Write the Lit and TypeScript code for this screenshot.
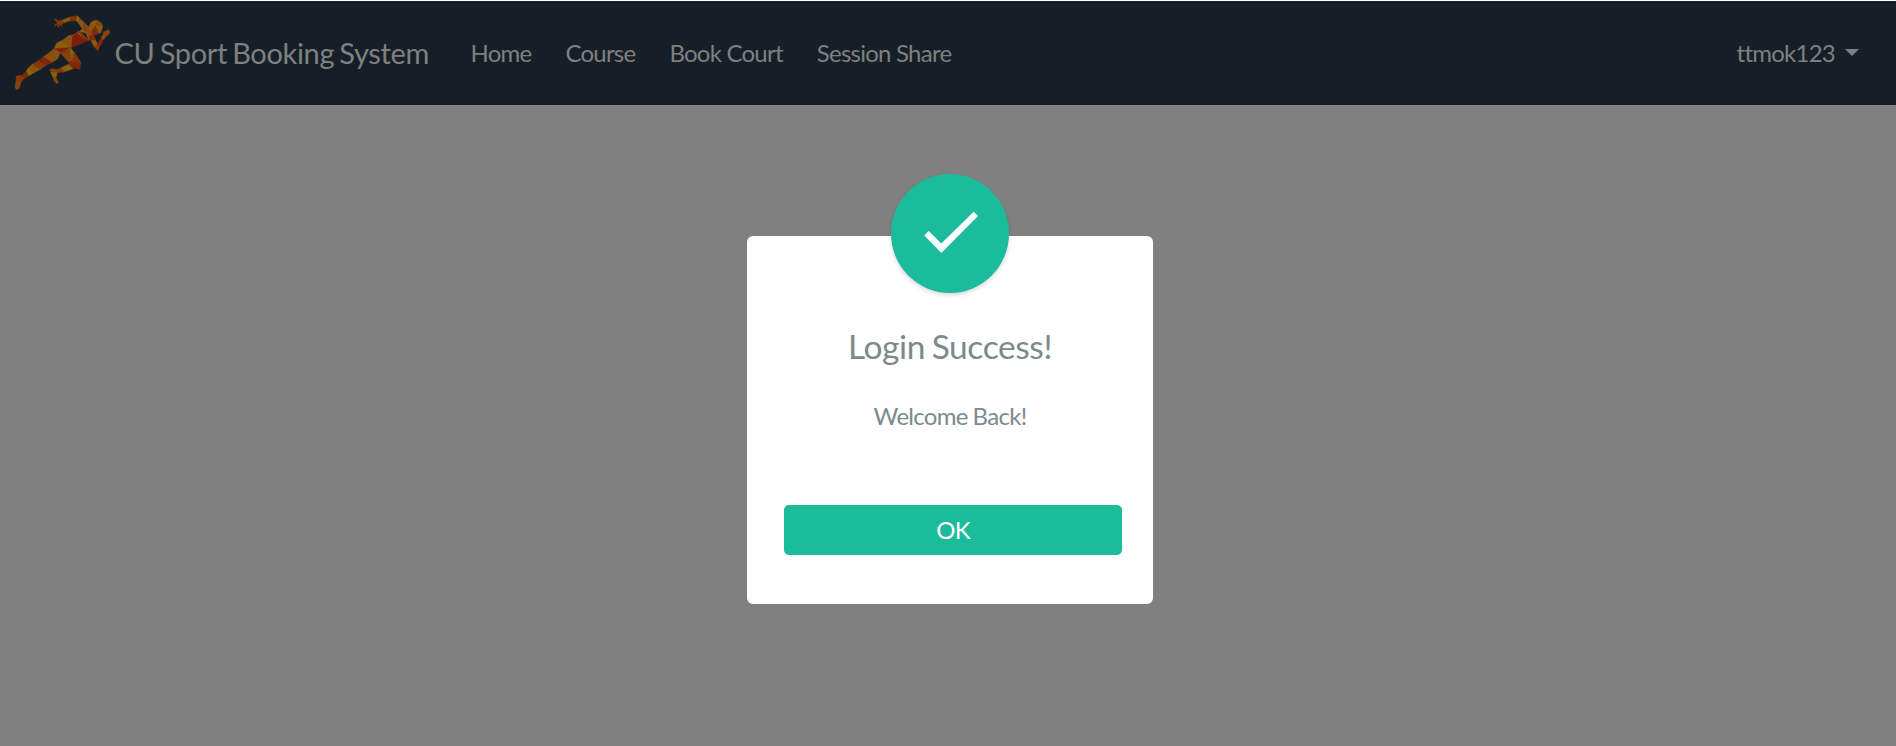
import { LitElement, html, svg, css } from "lit";
import { customElement, property } from "lit/decorators.js";

const FACETS: [string, string][] = [
  // rear arm
  ["163,58 168,56 176,62 189,59 193,67 186,72 187,80 182,74 176,82 173,79 176,73 166,77 165,74 174,69", "#84380c"],
  ["189,59 214,50 212,62 192,68", "#8a5a0c"],
  ["214,50 234,47 230,62 211,62", "#84300c"],
  ["234,47 240,54 236,68 229,61", "#8c640a"],
  ["240,54 254,68 248,86 235,67", "#8a5412"],
  // shoulders and neck
  ["254,68 268,80 262,100 248,86", "#84401c"],
  ["268,80 274,92 283,105 268,122 259,100", "#8a4a10"],
  ["248,86 261,99 240,94", "#8c6208"],
  // head
  ["268,82 273,68 284,61 294,61 288,78 276,94 270,92", "#8c5a0a"],
  ["294,61 306,69 309,78 288,79", "#84480c"],
  ["309,78 306,91 292,89 287,78", "#8a5c10"],
  ["287,78 293,89 298,99 288,105 275,96", "#7e300c"],
  ["293,89 306,91 304,98 298,99", "#8c5408"],
  // front arm
  ["268,108 283,104 288,120 274,123", "#84280c"],
  ["274,123 288,120 294,133 286,143", "#8c5c08"],
  ["286,143 293,132 302,134 295,152", "#84380c"],
  ["294,133 305,112 313,115 301,140", "#7e280c"],
  ["305,112 314,102 319,107 313,118", "#8a520c"],
  ["311,103 312,95 318,94 325,88 331,93 329,102 319,110", "#8a400c"],
  // torso
  ["238,93 222,104 206,107 216,120 236,96", "#8a4c0e"],
  ["240,93 266,120 214,118", "#86560e"],
  ["238,94 268,121 248,114", "#84300c"],
  ["232,99 250,117 267,122 215,143 217,110", "#7c1c0a"],
  ["206,107 217,107 215,143 184,124", "#8a5014"],
  // hips
  ["184,122 214,143 200,149 163,146 170,130", "#8c5e0c"],
  ["163,146 212,143 182,158", "#7c200c"],
  ["182,158 212,143 211,164 190,164", "#843c0c"],
  // front leg
  ["212,143 225,160 211,166", "#8c640a"],
  ["182,158 211,162 207,187", "#85420c"],
  ["211,162 225,160 243,188 207,187", "#8a500e"],
  ["207,184 244,188 240,208 209,203", "#7e280c"],
  ["225,160 244,188 217,184", "#84360c"],
  ["207,193 220,207 192,216 183,204", "#8c600a"],
  ["183,204 193,216 171,218 166,211", "#84380c"],
  ["149,210 158,206 171,210 172,220 162,222", "#84400e"],
  ["152,217 172,219 168,238 160,232", "#8c600a"],
  ["160,231 169,235 176,247 172,252 163,243", "#8a440c"],
  // rear leg
  ["163,146 182,158 173,177 147,159", "#8a5014"],
  ["147,159 173,177 156,188 130,171", "#8a500c"],
  ["130,171 156,188 138,197 116,182", "#80280c"],
  ["116,182 138,197 122,208 97,193", "#84380c"],
  ["97,193 122,208 105,217 84,206", "#8a560e"],
  ["84,206 105,217 86,228 79,215", "#8c640a"],
  ["79,215 86,228 72,238 63,229", "#7e280c"],
  ["62,226 74,235 63,246 49,241 48,229", "#84380c"],
  ["49,241 64,246 57,266 49,270 45,261", "#8a400e"],
];

@customElement("sport-navbar")
export class SportNavbar extends LitElement {
  @property() user = "";

  static styles = css`
    :host {
      display: block;
    }
    .bar {
      display: flex;
      align-items: center;
      height: 104px;
      background: #161f28;
      color: #808080;
      font-size: 24px;
      letter-spacing: -0.76px;
      line-height: 36px;
    }
    .logo {
      display: block;
      width: 114.5px;
      height: 104px;
      flex: none;
    }
    .brand {
      width: 314px;
      font-size: 29px;
      letter-spacing: -0.33px;
      word-spacing: -2px;
      white-space: nowrap;
    }
    .links {
      display: flex;
      gap: 34px;
      margin-left: 42px;
      white-space: nowrap;
    }
    .user {
      display: flex;
      align-items: center;
      gap: 10px;
      margin-left: auto;
      margin-right: 37px;
    }
    .caret {
      border: 7px solid transparent;
      border-top-color: #808080;
      border-bottom: 0;
      margin-bottom: 1px;
    }
  `;

  render() {
    return html`<nav class="bar">
      <svg class="logo" viewBox="0 3 345 312">
        ${FACETS.map(
          ([points, color]) =>
            svg`<polygon points=${points} fill=${color} stroke=${color} stroke-width="1.5"></polygon>`,
        )}
      </svg>
      <span class="brand">CU Sport Booking System</span>
      <div class="links">
        <span>Home</span><span>Course</span><span>Book Court</span><span>Session Share</span>
      </div>
      <div class="user"><span>${this.user}</span><i class="caret"></i></div>
    </nav>`;
  }
}

@customElement("success-dialog")
export class SuccessDialog extends LitElement {
  static styles = css`
    :host {
      display: block;
    }
    .card {
      position: relative;
      box-sizing: border-box;
      width: 406px;
      height: 368px;
      padding: 87px 31px 0 37px;
      border-radius: 6px;
      background: #fff;
      color: #7b8a8b;
      text-align: center;
    }
    .badge {
      position: absolute;
      left: 144px;
      top: -62px;
      width: 118px;
      height: 119px;
      border-radius: 50%;
      background: #1abc9c;
      box-shadow: 0 2px 4px rgba(0, 0, 0, 0.16);
    }
    .tick {
      display: block;
      width: 118px;
      height: 119px;
    }
    .title {
      margin: 0 -31px 0 -37px;
      font-size: 33.5px;
      letter-spacing: -0.4px;
      word-spacing: -1.5px;
      font-weight: 400;
      line-height: 47px;
    }
    .text {
      margin: 28px -31px 0 -37px;
      font-size: 24px;
      letter-spacing: -0.7px;
      word-spacing: -0.7px;
      line-height: 36px;
    }
    .ok {
      display: block;
      width: 338px;
      height: 50px;
      margin-top: 71px;
      padding: 0;
      border: 0;
      border-radius: 5px;
      background: #1abc9c;
      color: #fff;
      font: inherit;
      font-size: 24px;
      letter-spacing: -0.78px;
      line-height: 50px;
    }
  `;

  render() {
    return html`<div class="card">
      <div class="badge">
        <svg class="tick" viewBox="483 42 354 357">
          <path d="M583 226.500L596 213L634 250.500L731 155L744 168L634 279Z" fill="#fff"></path>
        </svg>
      </div>
      <h4 class="title">Login Success!</h4>
      <p class="text">Welcome Back!</p>
      <button class="ok">OK</button>
    </div>`;
  }
}

@customElement("app-root")
export class AppRoot extends LitElement {
  static styles = css`
    :host {
      display: block;
      font-family: Lato, sans-serif;
    }
    .page {
      box-sizing: border-box;
      height: 746px;
      border-top: 1px solid #fff;
      background: #808080;
      overflow: hidden;
    }
    .dialog {
      width: 406px;
      margin: 131px 0 0 747px;
    }
  `;

  render() {
    return html`<div class="page">
      <sport-navbar user="ttmok123"></sport-navbar>
      <success-dialog class="dialog"></success-dialog>
    </div>`;
  }
}
